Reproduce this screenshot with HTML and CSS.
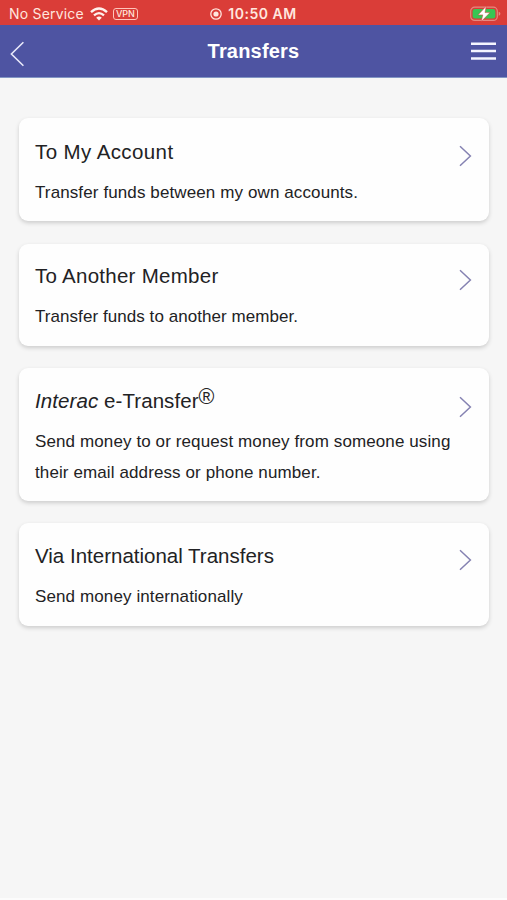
FILE: index.html
```html
<!DOCTYPE html>
<html lang="en">
<head>
<meta charset="utf-8">
<title>Transfers</title>
<link rel="stylesheet" href="styles.css">
</head>
<body>
<div class="status">
  <div class="status-left">
    <span class="carrier">No Service</span>
    <svg class="wifi" width="18" height="14" viewBox="0 0 18 14"><path d="M1 5.2Q9-2.2 17 5.2" fill="none" stroke="#fff2ec" stroke-width="2.4"/><path d="M4 8.4Q9 3.9 14 8.4" fill="none" stroke="#fff2ec" stroke-width="2.3"/><path d="M6.2 10.7Q9 8.2 11.8 10.7L9 13.6Z" fill="#fff2ec"/></svg>
    <span class="vpn">VPN</span>
  </div>
  <div class="status-time">
    <svg width="12" height="12" viewBox="0 0 12 12"><circle cx="6" cy="6" r="5.2" fill="none" stroke="#ffe6de" stroke-width="1.3"/><circle cx="6" cy="6" r="2.6" fill="#ffe6de"/></svg>
    <span class="clock">10:50 AM</span>
  </div>
  <svg class="battery" width="31" height="16" viewBox="0 0 31 16"><rect x=".7" y="1.2" width="26.6" height="13.2" rx="4" fill="none" stroke="#e58a80" stroke-width="1.2"/><rect x="2.6" y="3" width="22.8" height="9.6" rx="2.4" fill="#38c653"/><path d="M28.7 5.8Q30.4 6.5 30.4 7.8T28.7 9.8Z" fill="#e58a80"/><path d="M16.2.3L8 8.9H12.8L11.2 15.6L20 6.6H15Z" fill="#fff" stroke="#d73d38" stroke-width=".5"/></svg>
</div>
<header class="bar">
  <svg class="back" width="16" height="26" viewBox="0 0 16 26"><path d="M14.4 1.2L2.4 13L14.4 24.8" fill="none" stroke="#e9e9fa" stroke-width="1.6"/></svg>
  <h1>Transfers</h1>
  <svg class="menu" width="25" height="18" viewBox="0 0 25 18"><path d="M0 1.7H25M0 9.1H25M0 16.5H25" stroke="#f4f5ff" stroke-width="2.5"/></svg>
</header>
<main class="list">
  <a class="card account">
    <h2>To My Account</h2>
    <p>Transfer funds between my own accounts.</p>
    <svg class="chevron" width="14" height="22" viewBox="0 0 14 22"><path d="M2 1.2L12.4 11L2 20.8" fill="none" stroke="#8582b2" stroke-width="1.5"/></svg>
  </a>
  <a class="card member">
    <h2>To Another Member</h2>
    <p>Transfer funds to another member.</p>
    <svg class="chevron" width="14" height="22" viewBox="0 0 14 22"><path d="M2 1.2L12.4 11L2 20.8" fill="none" stroke="#8582b2" stroke-width="1.5"/></svg>
  </a>
  <a class="card interac">
    <h2><em>Interac</em> e-Transfer<span class="reg">®</span></h2>
    <p>Send money to or request money from someone using<br>their email address or phone number.</p>
    <svg class="chevron" width="14" height="22" viewBox="0 0 14 22"><path d="M2 1.2L12.4 11L2 20.8" fill="none" stroke="#8582b2" stroke-width="1.5"/></svg>
  </a>
  <a class="card international">
    <h2>Via International Transfers</h2>
    <p>Send money internationally</p>
    <svg class="chevron" width="14" height="22" viewBox="0 0 14 22"><path d="M2 1.2L12.4 11L2 20.8" fill="none" stroke="#8582b2" stroke-width="1.5"/></svg>
  </a>
</main>
</body>
</html>
```

FILE: styles.css
```css
* { box-sizing: border-box; }
body {
  margin: 0;
  height: 900px;
  overflow: hidden;
  background: #f6f6f6;
  border-bottom: 2px solid #fcfcfc;
  font-family: "Liberation Sans", Arial, sans-serif;
  color: #222224;
}
svg { display: block; flex: none; }
.status {
  height: 25px;
  display: grid;
  grid-template-columns: 1fr auto 1fr;
  align-items: center;
  padding: 2px 6px 0 9px;
  background: #da3d38;
  color: #ffe6de;
  font-family: Inter, sans-serif;
}
.status-left, .status-time { display: flex; align-items: center; }
.carrier { font-size: 14px; line-height: 20px; letter-spacing: 0.2px; white-space: nowrap; }
.wifi { margin-left: 6px; }
.vpn {
  margin-left: 5px;
  width: 25px;
  height: 12px;
  border: 1px solid #ffc5bb;
  border-radius: 3px;
  font-size: 9px;
  line-height: 10px;
  font-weight: 500;
  text-align: center;
}
.status-time { gap: 6px; margin-left: -3px; }
.clock { font-size: 14px; line-height: 20px; font-weight: 600; letter-spacing: 0.5px; }
.battery { justify-self: end; }
.bar {
  height: 53px;
  display: grid;
  grid-template-columns: 1fr auto 1fr;
  align-items: center;
  padding: 0 11px;
  background: #4e54a2;
  border-bottom: 1px solid #8296c4;
}
.back { margin: 5px 0 0 -2px; }
.bar h1 {
  margin: 0;
  font-size: 20px;
  line-height: 24px;
  font-weight: 700;
  letter-spacing: 0.2px;
  color: #fff;
}
.menu { justify-self: end; }
.list {
  display: flex;
  flex-direction: column;
  gap: 22px;
  padding: 40px 18px 0 19px;
}
.card {
  display: grid;
  grid-template-columns: 1fr 14px;
  grid-template-rows: 30px auto;
  row-gap: 10px;
  padding: 18px 17px 0 16px;
  border-radius: 9px;
  background: #fefefe;
  box-shadow: 0 2px 4px rgba(0, 0, 0, 0.17);
}
.account, .international { height: 103px; }
.account { margin-bottom: 1px; padding-top: 19px; }
.member { height: 102px; padding-top: 17px; }
.interac { height: 133px; }
.card h2 { margin: 0; font-size: 20.5px; line-height: 30px; font-weight: 400; white-space: nowrap; }
.account h2 { letter-spacing: 0.4px; }
.member h2 { letter-spacing: 0.27px; }
.interac h2 { letter-spacing: 0.08px; }
.card p { margin: 0; font-size: 17px; line-height: 31px; letter-spacing: 0.11px; white-space: nowrap; }
.member p { letter-spacing: 0.06px; }
.reg { display: inline-block; font-size: 21.5px; line-height: 20px; vertical-align: 4px; }
.chevron { grid-column: 2; grid-row: 1; margin-top: 8px; }
.account .chevron { margin-top: 7.5px; }
.interac .chevron { margin-top: 10px; }
```
